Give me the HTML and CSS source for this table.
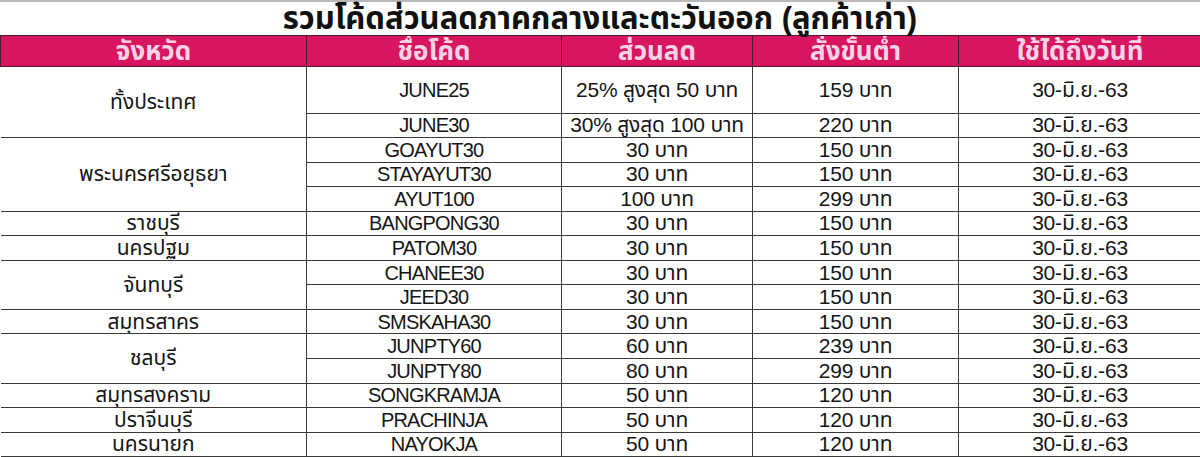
FILE: index.html
```html
<!DOCTYPE html>
<html lang="th">
<head>
<meta charset="utf-8">
<title>รวมโค้ดส่วนลด</title>
<link rel="stylesheet" href="styles.css">
</head>
<body>
<div class="sheet">
  <h1 class="title">รวมโค้ดส่วนลดภาคกลางและตะวันออก (ลูกค้าเก่า)</h1>
  <table class="codes">
    <colgroup>
      <col class="c1"><col class="c2"><col class="c3"><col class="c4"><col class="c5">
    </colgroup>
    <thead>
      <tr class="head">
        <th>จังหวัด</th><th>ชื่อโค้ด</th><th>ส่วนลด</th><th>สั่งขั้นต่ำ</th><th>ใช้ได้ถึงวันที่</th>
      </tr>
    </thead>
    <tbody>
      <tr class="tall"><td rowspan="2" class="prov">ทั้งประเทศ</td><td class="code">JUNE25</td><td>25% สูงสุด 50 บาท</td><td>159 บาท</td><td>30-มิ.ย.-63</td></tr>
      <tr><td class="code">JUNE30</td><td>30% สูงสุด 100 บาท</td><td>220 บาท</td><td>30-มิ.ย.-63</td></tr>
      <tr><td rowspan="3" class="prov">พระนครศรีอยุธยา</td><td class="code">GOAYUT30</td><td>30 บาท</td><td>150 บาท</td><td>30-มิ.ย.-63</td></tr>
      <tr><td class="code">STAYAYUT30</td><td>30 บาท</td><td>150 บาท</td><td>30-มิ.ย.-63</td></tr>
      <tr><td class="code">AYUT100</td><td>100 บาท</td><td>299 บาท</td><td>30-มิ.ย.-63</td></tr>
      <tr><td class="prov">ราชบุรี</td><td class="code">BANGPONG30</td><td>30 บาท</td><td>150 บาท</td><td>30-มิ.ย.-63</td></tr>
      <tr><td class="prov">นครปฐม</td><td class="code">PATOM30</td><td>30 บาท</td><td>150 บาท</td><td>30-มิ.ย.-63</td></tr>
      <tr><td rowspan="2" class="prov">จันทบุรี</td><td class="code">CHANEE30</td><td>30 บาท</td><td>150 บาท</td><td>30-มิ.ย.-63</td></tr>
      <tr><td class="code">JEED30</td><td>30 บาท</td><td>150 บาท</td><td>30-มิ.ย.-63</td></tr>
      <tr><td class="prov">สมุทรสาคร</td><td class="code">SMSKAHA30</td><td>30 บาท</td><td>150 บาท</td><td>30-มิ.ย.-63</td></tr>
      <tr><td rowspan="2" class="prov">ชลบุรี</td><td class="code">JUNPTY60</td><td>60 บาท</td><td>239 บาท</td><td>30-มิ.ย.-63</td></tr>
      <tr><td class="code">JUNPTY80</td><td>80 บาท</td><td>299 บาท</td><td>30-มิ.ย.-63</td></tr>
      <tr><td class="prov">สมุทรสงคราม</td><td class="code">SONGKRAMJA</td><td>50 บาท</td><td>120 บาท</td><td>30-มิ.ย.-63</td></tr>
      <tr><td class="prov">ปราจีนบุรี</td><td class="code">PRACHINJA</td><td>50 บาท</td><td>120 บาท</td><td>30-มิ.ย.-63</td></tr>
      <tr><td class="prov">นครนายก</td><td class="code">NAYOKJA</td><td>50 บาท</td><td>120 บาท</td><td>30-มิ.ย.-63</td></tr>
    </tbody>
  </table>
</div>
</body>
</html>
```
FILE: styles.css
```css
html, body {
  margin: 0;
  padding: 0;
  background: #ffffff;
}
body {
  width: 1200px;
  height: 457px;
  overflow: hidden;
  font-family: "Liberation Sans", Arial, "Noto Sans Thai", "Noto Sans", sans-serif;
  color: #151515;
}
.sheet {
  width: 1200px;
  border-top: 2px solid #b9b9b9;
}
.title {
  margin: 0;
  height: 33px;
  line-height: 33px;
  font-size: 31px;
  font-weight: bold;
  text-align: center;
  color: #111111;
}
.codes {
  border-collapse: collapse;
  table-layout: fixed;
  width: 1201px;
}
.c1 { width: 306px; }
.c2 { width: 255px; }
.c3 { width: 191px; }
.c4 { width: 206px; }
.c5 { width: 243px; }
.codes th, .codes td {
  padding: 0;
  text-align: center;
  vertical-align: middle;
  white-space: nowrap;
  overflow: hidden;
  border: 1px solid #3a3a3a;
}
.head th {
  height: 30px;
  line-height: 28px;
  background: #d7165f;
  color: #f9d3e5;
  font-size: 26px;
  font-weight: bold;
  border-color: #4a1a2c;
}
.codes td {
  height: 23.55px;
  font-size: 21px;
  letter-spacing: -0.2px;
  line-height: 20px;
}
.codes tr.tall td { height: 45.5px; }
.codes td.code {
  font-size: 20px;
  letter-spacing: -0.8px;
}
.codes td.prov { letter-spacing: 0; }
.codes tr td:first-child { border-left: none; }
```
